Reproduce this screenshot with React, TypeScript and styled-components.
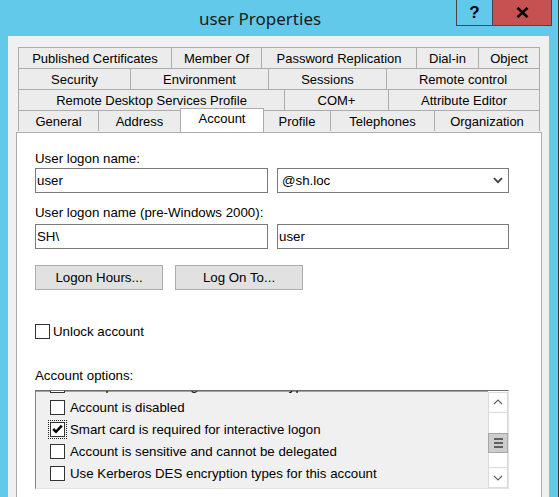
import styled, { createGlobalStyle } from 'styled-components';

const GlobalStyle = createGlobalStyle`
  html, body {
    margin: 0;
    padding: 0;
    background: #62c9ea;
    overflow: hidden;
  }
`;

const Window = styled.div`
  width: 559px;
  height: 497px;
  box-sizing: border-box;
  background: #62c9ea;
  border-right: 1px solid #3b3b3b;
  display: flex;
  flex-direction: column;
  overflow: hidden;
  font-family: "Liberation Sans", Arial, sans-serif;
  font-size: 13.3px;
  color: #000;
`;

const TitleBar = styled.div`
  height: 36px;
  flex-shrink: 0;
  display: flex;
  align-items: flex-start;
`;

const Title = styled.div`
  flex: 1;
  padding: 8px 0 0 64px;
  text-align: center;
  font-family: "Noto Sans", "Open Sans", sans-serif;
  font-size: 17px;
  line-height: 22px;
  color: #1a1a1a;
`;

const CaptionButtons = styled.div`
  display: flex;
  margin-right: 6px;
`;

const CaptionButton = styled.div<{ $close?: boolean }>`
  width: ${p => (p.$close ? 60 : 37)}px;
  height: 26px;
  box-sizing: border-box;
  border: 1px solid #474747;
  border-top: none;
  margin-left: ${p => (p.$close ? -1 : 0)}px;
  background: ${p => (p.$close ? '#c75050' : 'transparent')};
  display: flex;
  align-items: center;
  justify-content: center;
  font-weight: bold;
  font-size: 17px;
  color: #000;
`;

const Client = styled.div`
  flex: 1;
  margin: 0 9px 0 8px;
  background: #f0f0f0;
  padding: 11px 7px 0 8px;
  display: flex;
  flex-direction: column;
`;

const Tabs = styled.div`
  margin: 0 2px;
  display: flex;
  flex-direction: column;
`;

const TabRow = styled.div`
  display: flex;
`;

const Tab = styled.div<{ $w?: number; $active?: boolean }>`
  box-sizing: border-box;
  ${p => (p.$w ? `width: ${p.$w}px;` : 'flex: 1;')}
  height: ${p => (p.$active ? 24 : 21)}px;
  margin-top: ${p => (p.$active ? -2 : 0)}px;
  margin-right: ${p => (p.$active ? -1 : 0)}px;
  padding-bottom: ${p => (p.$active ? 4 : 0)}px;
  border-top: 1px solid #acacac;
  border-left: 1px solid #acacac;
  border-right: ${p => (p.$active || !p.$w ? '1px solid #acacac' : 'none')};
  background: ${p => (p.$active ? '#fff' : '#ececec')};
  position: relative;
  z-index: ${p => (p.$active ? 2 : 0)};
  display: flex;
  align-items: center;
  justify-content: center;
  white-space: nowrap;
  font-size: 13px;
`;

const Page = styled.div`
  flex: 1;
  background: #fff;
  border: 1px solid #acacac;
  border-bottom: none;
  padding: 18px 18px 0;
  display: flex;
  flex-direction: column;
  align-items: flex-start;
`;

const Label = styled.div<{ $mt: number }>`
  margin-top: ${p => p.$mt}px;
  line-height: 16px;
  white-space: nowrap;
`;

const FieldRow = styled.div<{ $mt: number; $gap: number }>`
  margin-top: ${p => p.$mt}px;
  display: flex;
  gap: ${p => p.$gap}px;
`;

const TextBox = styled.div<{ $w: number }>`
  width: ${p => p.$w}px;
  height: 25px;
  box-sizing: border-box;
  border: 1px solid #7a7a7a;
  padding: 0 2px 0 1px;
  display: flex;
  align-items: center;
  background: #fff;
`;

const Select = styled(TextBox)`
  padding: 0 5px 0 4px;
  justify-content: space-between;
`;

const Button = styled.div`
  width: 128px;
  height: 25px;
  box-sizing: border-box;
  border: 1px solid #adadad;
  background: #e1e1e1;
  display: flex;
  align-items: center;
  justify-content: center;
`;

const CheckRow = styled.div<{ $gap: number; $mt?: number }>`
  margin-top: ${p => p.$mt ?? 0}px;
  display: flex;
  align-items: center;
  gap: ${p => p.$gap}px;
  white-space: nowrap;
`;

const Box = styled.span<{ $focus?: boolean }>`
  width: 15px;
  height: 15px;
  box-sizing: border-box;
  flex-shrink: 0;
  border: 1px solid #333;
  background: #fff;
  display: flex;
  align-items: center;
  justify-content: center;
  outline: ${p => (p.$focus ? '1px dotted #222' : 'none')};
  outline-offset: 1px;
`;

const ListBox = styled.div`
  margin-top: 6px;
  width: 474px;
  height: 99px;
  box-sizing: border-box;
  border-top: 1px solid #6d6d6d;
  border-left: 1px solid #828282;
  border-right: 1px solid #e3e3e3;
  border-bottom: 1px solid #e3e3e3;
  background: #f0f0f0;
  box-shadow: inset 0 1px 0 #a0a0a0;
  display: flex;
`;

const Items = styled.div`
  flex: 1;
  overflow: hidden;
  display: flex;
  flex-direction: column;
`;

const Item = styled(CheckRow)`
  height: 22px;
  flex-shrink: 0;
  padding-left: 14px;
  &:first-child {
    margin-top: -17px;
  }
`;

const ScrollBar = styled.div`
  width: 20px;
  padding-top: 1px;
  background: #fff;
  display: flex;
  flex-direction: column;
`;

const ScrollButton = styled.div`
  height: 21px;
  box-sizing: border-box;
  border: 1px solid #dadada;
  background: #fff;
  display: flex;
  align-items: center;
  justify-content: center;
`;

const Track = styled.div<{ $h: number }>`
  height: ${p => p.$h}px;
  border-left: 1px solid #dadada;
  border-right: 1px solid #dadada;
  background: #fff;
`;

const Thumb = styled.div`
  height: 21px;
  box-sizing: border-box;
  border: 1px solid #a6a6a6;
  background: #cdcdcd;
  display: flex;
  flex-direction: column;
  align-items: center;
  justify-content: center;
  gap: 2px;
`;

const Grip = styled.span`
  width: 9px;
  height: 2px;
  background: #606060;
`;

const Check = () => (
  <svg width="11" height="10" viewBox="0 0 11 10">
    <path d="M1.2 5 L4 7.8 L9.8 1.6" fill="none" stroke="#000" strokeWidth="2.5" />
  </svg>
);

const tabRows: { label: string; w?: number; active?: boolean }[][] = [
  [
    { label: 'Published Certificates', w: 153 },
    { label: 'Member Of', w: 90 },
    { label: 'Password Replication', w: 155 },
    { label: 'Dial-in', w: 62 },
    { label: 'Object' },
  ],
  [
    { label: 'Security', w: 112 },
    { label: 'Environment', w: 138 },
    { label: 'Sessions', w: 118 },
    { label: 'Remote control' },
  ],
  [
    { label: 'Remote Desktop Services Profile', w: 266 },
    { label: 'COM+', w: 104 },
    { label: 'Attribute Editor' },
  ],
  [
    { label: 'General', w: 80 },
    { label: 'Address', w: 82 },
    { label: 'Account', w: 84, active: true },
    { label: 'Profile', w: 67 },
    { label: 'Telephones', w: 104 },
    { label: 'Organization' },
  ],
];

const options = [
  { label: 'Store password using reversible encryption' },
  { label: 'Account is disabled' },
  { label: 'Smart card is required for interactive logon', checked: true },
  { label: 'Account is sensitive and cannot be delegated' },
  { label: 'Use Kerberos DES encryption types for this account' },
  { label: 'This account supports Kerberos AES 128 bit encryption.' },
];

const App = () => (
  <>
    <GlobalStyle />
    <Window>
      <TitleBar>
        <Title>user Properties</Title>
        <CaptionButtons>
          <CaptionButton>?</CaptionButton>
          <CaptionButton $close>
            <svg width="13" height="11" viewBox="0 0 13 11">
              <path d="M1.5 0.8 L11.5 10.2 M11.5 0.8 L1.5 10.2" stroke="#000" strokeWidth="2.6" />
            </svg>
          </CaptionButton>
        </CaptionButtons>
      </TitleBar>
      <Client>
        <Tabs>
          {tabRows.map((row, i) => (
            <TabRow key={i}>
              {row.map(t => (
                <Tab key={t.label} $w={t.w} $active={t.active}>
                  {t.label}
                </Tab>
              ))}
            </TabRow>
          ))}
        </Tabs>
        <Page>
          <Label $mt={0}>User logon name:</Label>
          <FieldRow $mt={1} $gap={9}>
            <TextBox $w={233}>user</TextBox>
            <Select $w={232}>
              @sh.loc
              <svg width="10" height="7" viewBox="0 0 10 7">
                <path d="M1 1.2 L5 5.2 L9 1.2" fill="none" stroke="#404040" strokeWidth="1.8" />
              </svg>
            </Select>
          </FieldRow>
          <Label $mt={12}>User logon name (pre-Windows 2000):</Label>
          <FieldRow $mt={3} $gap={9}>
            <TextBox $w={233}>SH\</TextBox>
            <TextBox $w={232}>user</TextBox>
          </FieldRow>
          <FieldRow $mt={16} $gap={12}>
            <Button>Logon Hours...</Button>
            <Button>Log On To...</Button>
          </FieldRow>
          <CheckRow $gap={3} $mt={34}>
            <Box />
            Unlock account
          </CheckRow>
          <Label $mt={29}>Account options:</Label>
          <ListBox>
            <Items>
              {options.map(o => (
                <Item key={o.label} $gap={5}>
                  <Box $focus={o.checked}>{o.checked && <Check />}</Box>
                  {o.label}
                </Item>
              ))}
            </Items>
            <ScrollBar>
              <ScrollButton>
                <svg width="10" height="6" viewBox="0 0 10 6">
                  <path d="M1 5 L5 1 L9 5" fill="none" stroke="#606060" strokeWidth="1.1" />
                </svg>
              </ScrollButton>
              <Track $h={20} />
              <Thumb>
                <Grip />
                <Grip />
                <Grip />
              </Thumb>
              <Track $h={14} />
              <ScrollButton>
                <svg width="10" height="6" viewBox="0 0 10 6">
                  <path d="M1 1 L5 5 L9 1" fill="none" stroke="#606060" strokeWidth="1.1" />
                </svg>
              </ScrollButton>
            </ScrollBar>
          </ListBox>
        </Page>
      </Client>
    </Window>
  </>
);

export default App;
